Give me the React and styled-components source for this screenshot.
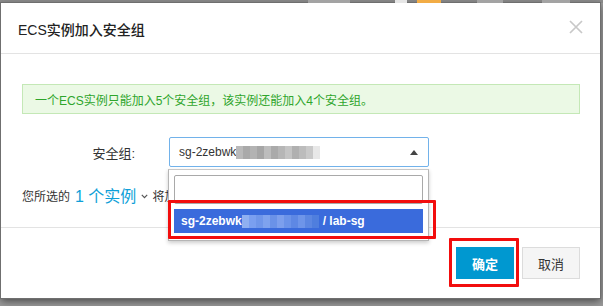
import React from 'react';
import styled, { createGlobalStyle } from 'styled-components';

const GlobalStyle = createGlobalStyle`
  html, body {
    margin: 0;
    padding: 0;
    background: #999;
    font-family: "Liberation Sans", "Noto Sans CJK SC", sans-serif;
    overflow: hidden;
  }
`;

const Page = styled.div`
  width: 603px;
  height: 306px;
  background: #9a9a9a;
`;

const TopStrip = styled.div`
  height: 3px;
  display: flex;
  background: #8c8c8c;
  overflow: hidden;
`;

const StripBit = styled.span`
  display: block;
  height: 3px;
  width: ${p => p.w}px;
  margin-left: ${p => p.gap}px;
  background: ${p => p.color};
`;

const Modal = styled.div`
  margin-left: 1px;
  width: 599px;
  height: 295px;
  background: #fff;
  box-shadow: 0 0 0 1px #6f6f6f, 0 3px 8px rgba(0, 0, 0, 0.55);
  display: flex;
  flex-direction: column;
`;

const Header = styled.div`
  height: 50px;
  display: flex;
  align-items: center;
  justify-content: space-between;
  padding: 0 17px 0 17px;
  border-bottom: 1px solid #e3e3e3;
`;

const Title = styled.h3`
  margin: 0;
  font-size: 14px;
  font-weight: 500;
  color: #222;
  padding-top: 1px;
`;

const CloseBtn = styled.span`
  display: flex;
  width: 14px;
  height: 14px;
  margin-top: -2px;
  cursor: pointer;
`;

const Body = styled.div`
  padding: 30px 20px 22px 21px;
  border-bottom: 1px solid #e3e3e3;
  display: flex;
  flex-direction: column;
`;

const Alert = styled.div`
  height: 28px;
  display: flex;
  align-items: center;
  padding: 0 12px;
  background: #ebf9e5;
  border: 1px solid #c4e8b6;
  color: #2fa52c;
  font-size: 12px;
`;

const FormRow = styled.div`
  display: flex;
  align-items: center;
  margin-top: 23px;
  height: 30px;
`;

const Label = styled.label`
  width: 113px;
  margin-right: 34px;
  text-align: right;
  font-size: 13px;
  color: #333;
`;

const SelectWrap = styled.div`
  position: relative;
  width: 260px;
  height: 30px;
`;

const SelectBox = styled.div`
  box-sizing: border-box;
  height: 30px;
  display: flex;
  align-items: center;
  padding: 0 10px 0 9px;
  border: 1px solid #72b2ea;
  border-radius: 2px;
  font-size: 12px;
  color: #333;
  background: #fff;
`;

const Mosaic = styled.span`
  display: inline-flex;
  height: 13px;
  margin: 0 ${p => p.after || 0}px 0 0;
`;

const Cell = styled.span`
  display: block;
  width: 7px;
  height: 13px;
  background: ${p => p.color};
`;

const Caret = styled.span`
  margin-left: auto;
  width: 0;
  height: 0;
  border-left: 4px solid transparent;
  border-right: 4px solid transparent;
  border-bottom: 5px solid #444;
`;

const Dropdown = styled.div`
  position: absolute;
  top: 32px;
  left: -1px;
  width: 261px;
  height: 72px;
  box-sizing: border-box;
  padding: 5px 5px 0 5px;
  background: #fff;
  border: 1px solid #b5b5b5;
  border-top-color: #c8c8c8;
  box-shadow: 0 2px 4px rgba(0, 0, 0, 0.2);
  z-index: 2;
`;

const SearchInput = styled.div`
  height: 29px;
  box-sizing: border-box;
  border: 1px solid #a9a9a9;
  border-radius: 2px;
`;

const Option = styled.div`
  margin-top: 5px;
  height: 24px;
  display: flex;
  align-items: center;
  padding-left: 7px;
  background: #3a6bdc;
  color: #fff;
  font-size: 12px;
  font-weight: 600;
`;

const Annotation = styled.span`
  position: absolute;
  box-sizing: border-box;
  left: ${p => p.left}px;
  top: ${p => p.top}px;
  width: ${p => p.w}px;
  height: ${p => p.h}px;
  border: 3px solid #f20d0d;
  border-radius: 1px;
  pointer-events: none;
`;

const InfoRow = styled.div`
  margin-top: 18px;
  height: 20px;
  display: flex;
  align-items: center;
  font-size: 12px;
  color: #333;
`;

const Count = styled.span`
  color: #0e9fd8;
  font-size: 16px;
  margin: 0 5px;
`;

const Chevron = styled.span`
  display: flex;
  margin: 2px 4px 0 0;
`;

const Footer = styled.div`
  flex: 1;
  display: flex;
  justify-content: flex-end;
  align-items: flex-start;
  gap: 8px;
  padding: 19px 20px 0 0;
`;

const ButtonSlot = styled.span`
  position: relative;
  display: flex;
`;

const Button = styled.button`
  width: 58px;
  height: 32px;
  padding: 0;
  font-family: inherit;
  font-size: 13px;
  border-radius: 0;
  cursor: pointer;
  background: ${p => (p.primary ? '#0098d0' : '#f5f5f5')};
  color: ${p => (p.primary ? '#fff' : '#333')};
  border: 1px solid ${p => (p.primary ? '#0098d0' : '#dcdcdc')};
  font-weight: ${p => (p.primary ? 600 : 400)};
`;

const greyCells = ['#b9b9b9', '#a9a9a9', '#b3b3b3', '#a6a6a6', '#bdbdbd', '#aaaaaa', '#b6b6b6', '#c4c4c4', '#b0b0b0', '#bcbcbc', '#c9c9c9', '#e8e8e8'];
const blueCells = ['#8fb0f1', '#7a9ff0', '#6f96ea', '#7ea2ee', '#6a92e8', '#7c9fed', '#6b93e9', '#5e88e4', '#6e95e9', '#5c87e2', '#4f7ede'];

export default function App() {
  return (
    <Page>
      <GlobalStyle />
      <TopStrip>
        <StripBit w={42} gap={308} color="#a3a3a3" />
        <StripBit w={12} gap={45} color="#e6e6e6" />
        <StripBit w={24} gap={10} color="#f2ac45" />
        <StripBit w={26} gap={36} color="#a3a3a3" />
        <StripBit w={28} gap={39} color="#a3a3a3" />
      </TopStrip>
      <Modal>
        <Header>
          <Title>ECS实例加入安全组</Title>
          <CloseBtn>
            <svg width="14" height="14" viewBox="0 0 14 14">
              <path d="M1 1L13 13M13 1L1 13" stroke="#c8c8c8" strokeWidth="1.7" fill="none" />
            </svg>
          </CloseBtn>
        </Header>
        <Body>
          <Alert>一个ECS实例只能加入5个安全组，该实例还能加入4个安全组。</Alert>
          <FormRow>
            <Label>安全组:</Label>
            <SelectWrap>
              <SelectBox>
                sg-2zebwk
                <Mosaic>
                  {greyCells.map((c, i) => <Cell key={i} color={c} />)}
                </Mosaic>
                <Caret />
              </SelectBox>
              <Dropdown>
                <SearchInput />
                <Option>
                  sg-2zebwk
                  <Mosaic after={4}>
                    {blueCells.map((c, i) => <Cell key={i} color={c} />)}
                  </Mosaic>
                  / lab-sg
                </Option>
                <Annotation left={-1} top={30} w={268} h={39} />
              </Dropdown>
            </SelectWrap>
          </FormRow>
          <InfoRow>
            您所选的<Count>1 个实例</Count>
            <Chevron>
              <svg width="7" height="5" viewBox="0 0 7 5">
                <path d="M0.8 0.8L3.5 3.6L6.2 0.8" stroke="#555" strokeWidth="1.2" fill="none" />
              </svg>
            </Chevron>
            将加入安全组
          </InfoRow>
        </Body>
        <Footer>
          <ButtonSlot>
            <Button primary>确定</Button>
            <Annotation left={-7} top={-9} w={70} h={49} />
          </ButtonSlot>
          <ButtonSlot>
            <Button>取消</Button>
          </ButtonSlot>
        </Footer>
      </Modal>
    </Page>
  );
}
